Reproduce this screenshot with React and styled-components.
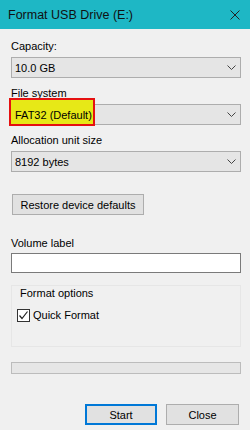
import React from 'react';
import styled, { createGlobalStyle } from 'styled-components';

const GlobalStyle = createGlobalStyle`
  body {
    margin: 0;
    background: #f0f0f0;
    font-family: "Liberation Sans", Arial, sans-serif;
  }
`;

const Window = styled.div`
  width: 250px;
  height: 430px;
  background: #f0f0f0;
  display: flex;
  flex-direction: column;
  font-size: 11px;
  color: #000;
  overflow: hidden;
`;

const TitleBar = styled.div`
  height: 29px;
  flex-shrink: 0;
  background: #1eb7c5;
  display: flex;
  align-items: center;
  justify-content: space-between;
  padding: 0 10px 0 8px;
  color: #111;
  font-size: 12.5px;
`;

const Content = styled.div`
  padding: 10px 9px 0 11px;
  display: flex;
  flex-direction: column;
`;

const Field = styled.div`
  display: flex;
  flex-direction: column;
  gap: ${p => p.$gap || 3}px;
  margin-top: ${p => p.$top || 0}px;
`;

const Label = styled.div`
  line-height: 15px;
  height: 15px;
`;

const Select = styled.div`
  position: relative;
  height: 21px;
  box-sizing: border-box;
  border: 1px solid #adadad;
  background: #e5e5e5;
  display: flex;
  align-items: center;
  justify-content: space-between;
  padding: 0 4px 0 3px;
`;

const Value = styled.span`
  position: relative;
  z-index: 1;
`;

const Highlight = styled.div`
  position: absolute;
  top: -7px;
  left: -3px;
  width: 86px;
  height: 28px;
  box-sizing: border-box;
  border: 2px solid #e51010;
  background: #e7e817;
`;

const Button = styled.button`
  height: 21px;
  width: ${p => p.$width}px;
  box-sizing: border-box;
  border: 1px solid ${p => (p.$primary ? '#0078d7' : '#adadad')};
  box-shadow: ${p => (p.$primary ? 'inset 0 0 0 1px #0078d7' : 'none')};
  background: #e1e1e1;
  font: inherit;
  color: #000;
  padding: 0;
`;

const RestoreButton = styled(Button)`
  margin-top: 22px;
  margin-left: 1px;
  align-self: flex-start;
`;

const TextInput = styled.div`
  height: 20px;
  box-sizing: border-box;
  border: 1px solid #7a7a7a;
  background: #fff;
`;

const Group = styled.div`
  margin-top: 12px;
  height: 62px;
  box-sizing: border-box;
  border: 1px solid #e6e6e6;
  padding: 0 0 0 5px;
  display: flex;
  flex-direction: column;
`;

const GroupTitle = styled.div`
  line-height: 15px;
  margin-left: 3px;
`;

const CheckRow = styled.label`
  margin-top: 7px;
  display: flex;
  align-items: center;
  gap: 3px;
  line-height: 15px;
`;

const CheckBox = styled.span`
  width: 13px;
  height: 13px;
  box-sizing: border-box;
  border: 1px solid #333;
  background: #fff;
  display: flex;
  align-items: center;
  justify-content: center;
`;

const Progress = styled.div`
  margin-top: 15px;
  height: 12px;
  box-sizing: border-box;
  border: 1px solid #bcbcbc;
  background: #e6e6e6;
`;

const Actions = styled.div`
  margin-top: 30px;
  display: flex;
  justify-content: flex-end;
  gap: 9px;
  padding-right: 2px;
`;

const Chevron = () => (
  <svg width="9" height="5" viewBox="0 0 9 5">
    <polyline points="0.5,0.5 4.5,4.5 8.5,0.5" fill="none" stroke="#444" strokeWidth="1" />
  </svg>
);

const CloseIcon = () => (
  <svg width="10" height="10" viewBox="0 0 10 10">
    <path d="M0.5 0.5 L9.5 9.5 M9.5 0.5 L0.5 9.5" stroke="#222" strokeWidth="1" />
  </svg>
);

const Check = () => (
  <svg width="11" height="11" viewBox="0 0 11 11">
    <polyline points="1.5,5.5 4,8.5 9.5,1.5" fill="none" stroke="#222" strokeWidth="1.2" />
  </svg>
);

export default function App() {
  return (
    <>
      <GlobalStyle />
      <Window>
        <TitleBar>
          <span>Format USB Drive (E:)</span>
          <CloseIcon />
        </TitleBar>
        <Content>
          <Field>
            <Label>Capacity:</Label>
            <Select>
              <Value>10.0 GB</Value>
              <Chevron />
            </Select>
          </Field>
          <Field $top={8}>
            <Label>File system</Label>
            <Select>
              <Highlight />
              <Value>FAT32 (Default)</Value>
              <Chevron />
            </Select>
          </Field>
          <Field $top={8}>
            <Label>Allocation unit size</Label>
            <Select>
              <Value>8192 bytes</Value>
              <Chevron />
            </Select>
          </Field>
          <RestoreButton $width={132}>Restore device defaults</RestoreButton>
          <Field $top={21} $gap={2}>
            <Label>Volume label</Label>
            <TextInput />
          </Field>
          <Group>
            <GroupTitle>Format options</GroupTitle>
            <CheckRow>
              <CheckBox>
                <Check />
              </CheckBox>
              Quick Format
            </CheckRow>
          </Group>
          <Progress />
          <Actions>
            <Button $width={72} $primary>Start</Button>
            <Button $width={73}>Close</Button>
          </Actions>
        </Content>
      </Window>
    </>
  );
}
